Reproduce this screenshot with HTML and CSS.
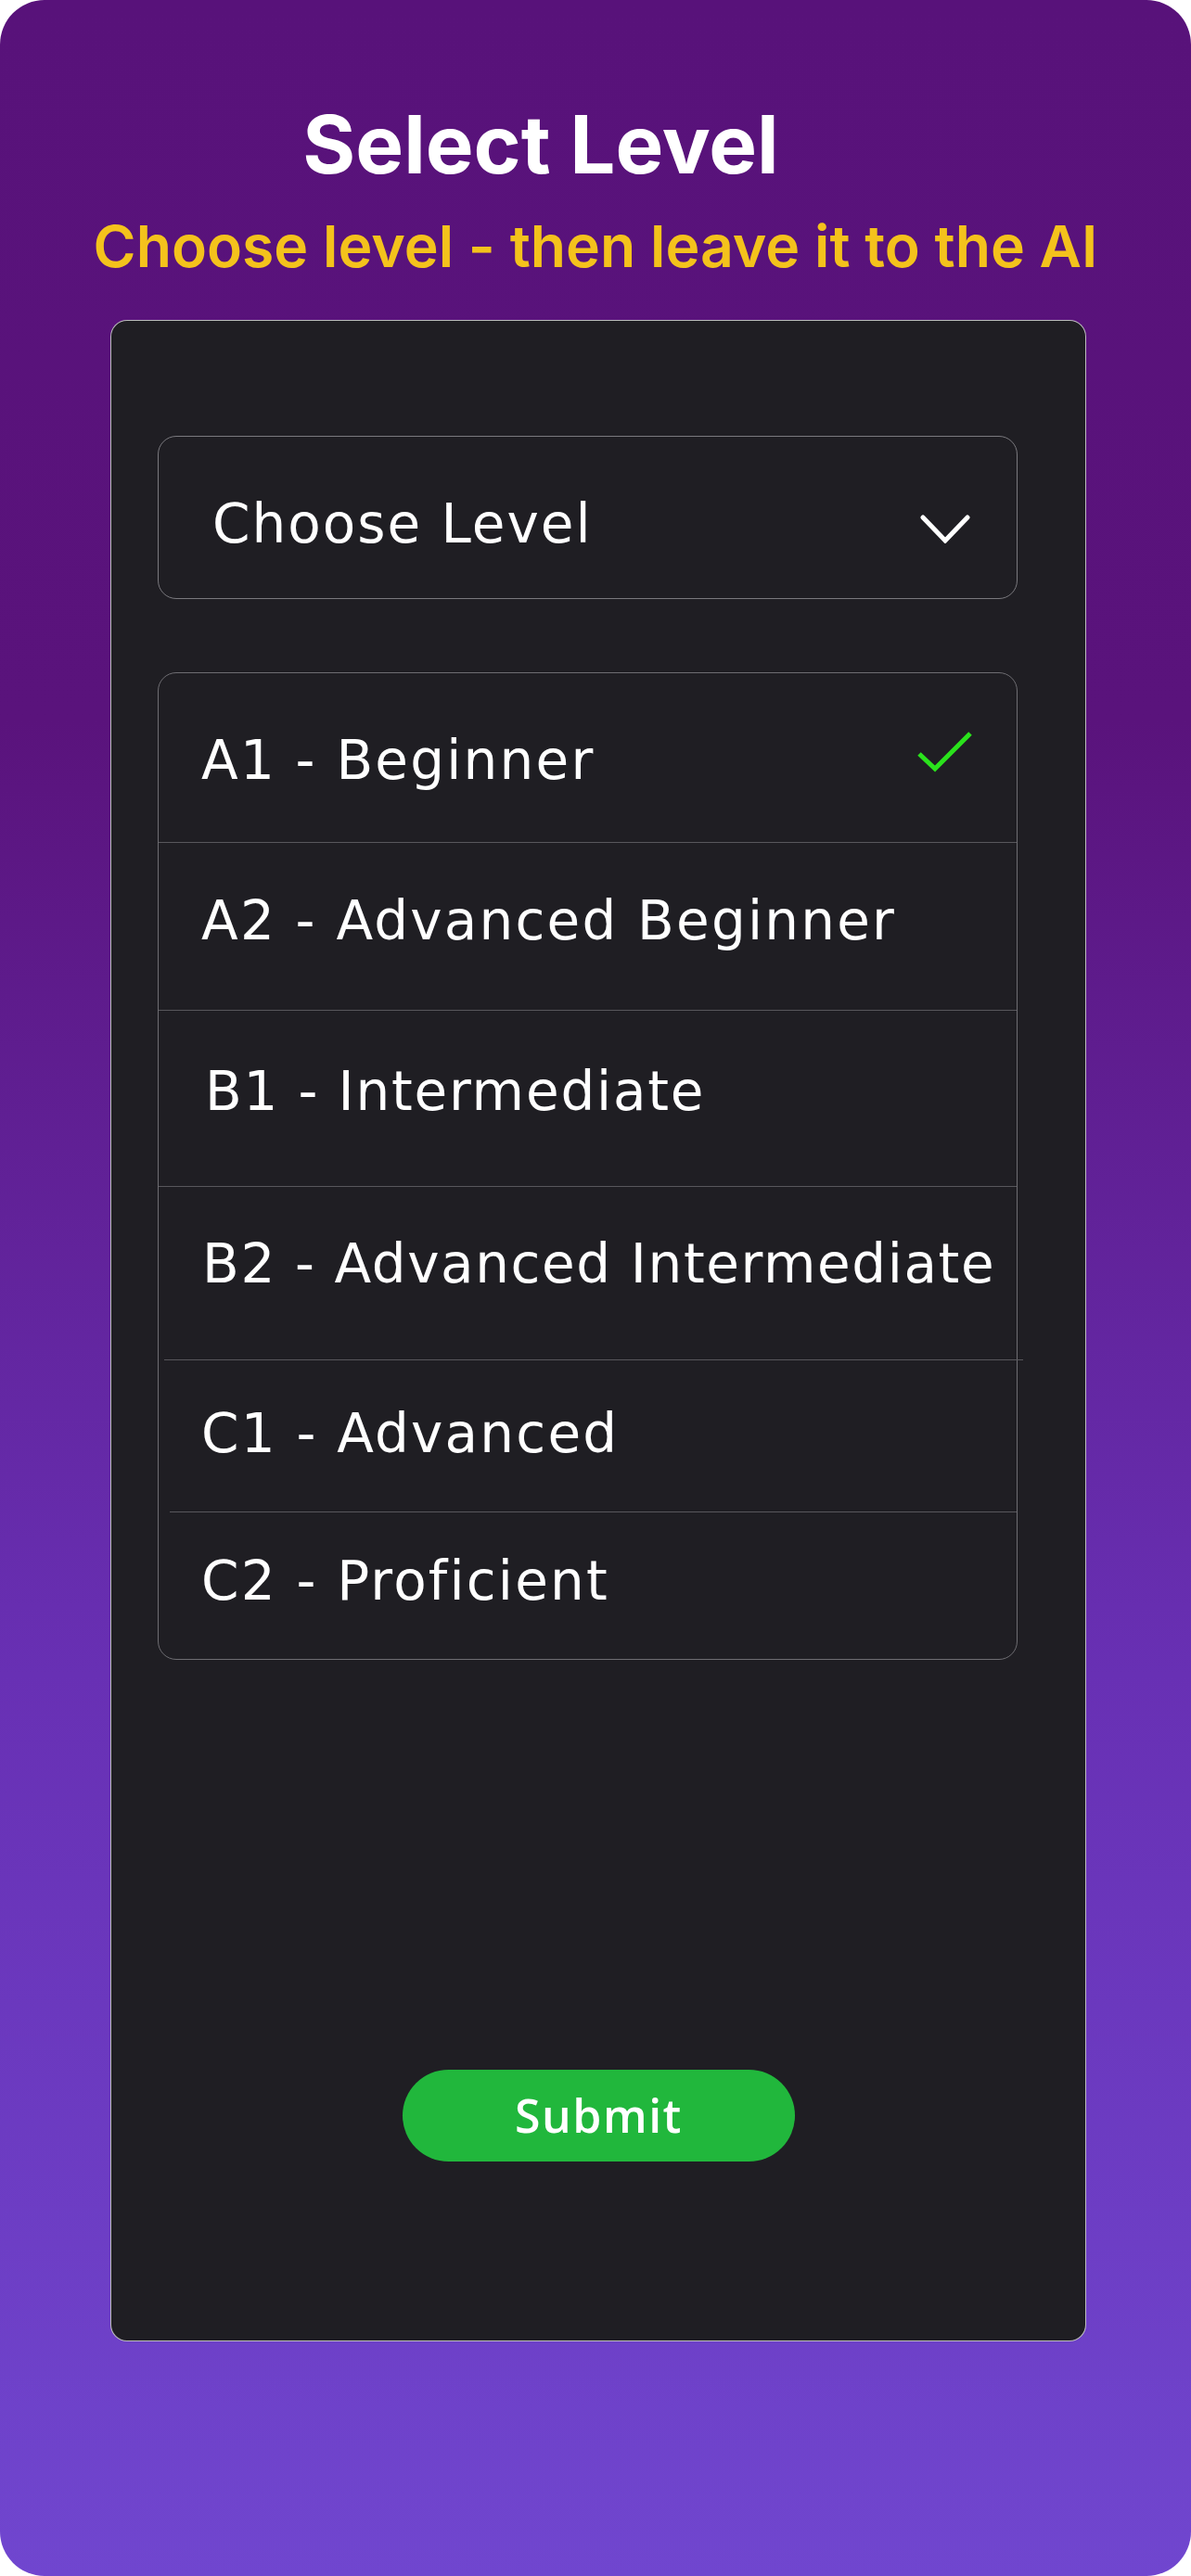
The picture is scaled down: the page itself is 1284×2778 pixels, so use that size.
FILE: index.html
```html
<!DOCTYPE html>
<html lang="en">
<head>
    <meta charset="UTF-8">
    <meta name="viewport" content="width=device-width, initial-scale=1.0">
    <title>Select Level</title>
    <link rel="stylesheet" href="styles.css">
</head>
<body>
    <div class="screen">
        <h1 class="title">Select Level</h1>
        <p class="subtitle">Choose level - then leave it to the AI</p>

        <div class="card">
            <div class="dropdown">
                <span class="dropdown-label">Choose Level</span>
                <svg class="chevron" width="54" height="32" viewBox="0 0 54 32">
                    <polyline points="3,4 27,29 51,4" fill="none" stroke="#fff" stroke-width="5" stroke-linecap="round"/>
                </svg>
            </div>

            <div class="level-list">
                <div class="level selected">
                    <span>A1 - Beginner</span>
                    <svg class="check" width="62" height="48" viewBox="0 0 62 48">
                        <polyline points="3,27 20,43 58,5" fill="none" stroke="#2ae21c" stroke-width="5"/>
                    </svg>
                </div>
                <div class="level"><span>A2 - Advanced Beginner</span></div>
                <div class="level"><span>B1 - Intermediate</span></div>
                <div class="level"><span>B2 - Advanced Intermediate</span></div>
                <div class="level"><span>C1 - Advanced</span></div>
                <div class="level"><span>C2 - Proficient</span></div>
            </div>

            <button class="submit">Submit</button>
        </div>
    </div>
</body>
</html>
```

FILE: styles.css
```css
body {
    margin: 0;
    padding: 0;
    background-color: #fff;
    font-family: 'DejaVu Sans', sans-serif;
}
.screen {
    width: 1284px;
    height: 2778px;
    border-radius: 48px;
    overflow: hidden;
    background: linear-gradient(180deg, #58127a 0%, #5a137c 28%, #6830b4 65%, #7046cf 100%);
    box-sizing: border-box;
    padding-top: 112px;
}
.title {
    margin: 0;
    padding-right: 118px;
    text-align: center;
    font-family: 'Inter', sans-serif;
    font-weight: 700;
    font-size: 87px;
    line-height: 1;
    color: #fff;
}
.subtitle {
    margin: 35px 0 0;
    text-align: center;
    font-family: 'Inter', sans-serif;
    font-weight: 600;
    font-size: 62.5px;
    line-height: 1;
    color: #f4c21c;
}
.card {
    margin: 48px 0 0 119px;
    width: 1052px;
    height: 2180px;
    box-sizing: border-box;
    padding: 124px 73px 0 50px;
    background-color: #1f1e23;
    border: 1px solid rgba(255, 255, 255, 0.7);
    border-radius: 18px; /* закруглені кути */
    display: flex;
    flex-direction: column;
}
.dropdown {
    height: 176px;
    box-sizing: border-box;
    border: 1.5px solid #7a797e;
    border-radius: 20px;
    padding: 14px 50px 0 58px;
    display: flex;
    align-items: center;
    justify-content: space-between;
    color: #fff;
}
.dropdown-label {
    font-size: 58px;
    letter-spacing: 2px;
    line-height: 1;
}
.chevron {
    display: block;
    margin-top: 10px;
}
.level-list {
    margin-top: 79px;
    border: 1.5px solid #6e6d72;
    border-radius: 20px;
    color: #fff;
}
.level {
    display: flex;
    align-items: center;
    justify-content: space-between;
    box-sizing: border-box;
    padding: 0 46px 9px 46px;
    font-size: 58px;
    letter-spacing: 2.2px;
    line-height: 1;
    white-space: nowrap;
    border-top: 1.5px solid #58575c;
}
.level:nth-child(1) { height: 182px; border-top: none; padding-bottom: 0; padding-top: 6px; }
.level:nth-child(2) { height: 181px; padding-bottom: 11px; }
.level:nth-child(3) { height: 190px; padding-left: 50px; padding-bottom: 14px; letter-spacing: 1.8px; }
.level:nth-child(4) { height: 187px; padding-left: 47px; padding-right: 10px; padding-bottom: 20px; letter-spacing: 1.6px; }
.level:nth-child(5) { height: 164px; margin-left: 6px; margin-right: -7px; padding-left: 40px; padding-bottom: 4px; }
.level:nth-child(6) { height: 159px; margin-left: 12px; padding-left: 34px; padding-bottom: 10px; }
.check {
    display: block;
    margin-bottom: 20px;
}
.submit {
    margin: 442px 0 0 264px;
    width: 423px;
    height: 99px;
    border: none;
    border-radius: 50px;
    background-color: #21b73c;
    color: #fff;
    font-family: 'Open Sans', sans-serif;
    font-weight: 600;
    font-size: 50px;
    letter-spacing: 1.5px;
    line-height: 1;
    padding: 0;
}
```
